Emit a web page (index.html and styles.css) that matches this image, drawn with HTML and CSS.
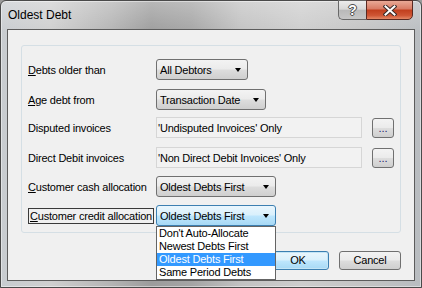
FILE: index.html
```html
<!DOCTYPE html>
<html>
<head>
<meta charset="utf-8">
<link rel="stylesheet" href="styles.css">
</head>
<body>
<div class="window">
  <div class="titlebar">
    <span class="title">Oldest Debt</span>
    <div class="caption">
      <div class="cbtn help">?</div>
      <div class="cbtn close">
        <svg width="14" height="11" viewBox="0 0 14 11">
          <path d="M2.5 1.5 L11.5 9.5 M11.5 1.5 L2.5 9.5" stroke="#3a2a28" stroke-width="4" stroke-linecap="square"/>
          <path d="M2.5 1.5 L11.5 9.5 M11.5 1.5 L2.5 9.5" stroke="#ffffff" stroke-width="2" stroke-linecap="square"/>
        </svg>
      </div>
    </div>
  </div>
  <div class="client">
    <div class="group">
      <div class="row">
        <span class="label"><u>D</u>ebts older than</span>
        <div class="combo w92"><span>All Debtors</span><i class="arrow"></i></div>
      </div>
      <div class="row g9">
        <span class="label"><u>A</u>ge debt from</span>
        <div class="combo w110"><span>Transaction Date</span><i class="arrow"></i></div>
      </div>
      <div class="row g7">
        <span class="label">Disputed invoices</span>
        <div class="field">'Undisputed Invoices' Only</div>
        <div class="dots">...</div>
      </div>
      <div class="row g9">
        <span class="label">Direct Debit invoices</span>
        <div class="field">'Non Direct Debit Invoices' Only</div>
        <div class="dots">...</div>
      </div>
      <div class="row g8">
        <span class="label"><u>C</u>ustomer cash allocation</span>
        <div class="combo w120"><span>Oldest Debts First</span><i class="arrow"></i></div>
      </div>
      <div class="row g8">
        <span class="label"><span class="focus"><u>C</u>ustomer credit allocation</span></span>
        <div class="combo w120 active"><span>Oldest Debts First</span><i class="arrow"></i>
          <ul class="list">
            <li>Don't Auto-Allocate</li>
            <li>Newest Debts First</li>
            <li class="sel">Oldest Debts First</li>
            <li>Same Period Debts</li>
          </ul>
        </div>
      </div>
    </div>
    <div class="buttons">
      <div class="btn default">OK</div>
      <div class="btn">Cancel</div>
    </div>
  </div>
</div>
</body>
</html>
```
FILE: styles.css
```css
* { box-sizing: border-box; }
html, body { margin: 0; padding: 0; }
body {
  width: 422px; height: 288px; overflow: hidden;
  font-family: "Liberation Sans", Arial, sans-serif;
  font-size: 11px; letter-spacing: -0.2px; color: #000;
  background: #9a9a9a;
}
.window {
  width: 422px; height: 288px;
  border: 1px solid #4a4a4a;
  border-radius: 6px 6px 0 0;
  padding: 0 6px 6px 6px;
  display: flex; flex-direction: column;
  background:
    linear-gradient(180deg, rgba(255,255,255,0.28) 0px, rgba(255,255,255,0.05) 28px, rgba(255,255,255,0) 30px),
    linear-gradient(90deg, #c8ccd0 0px, #cfcfcf 50px, #b4b4b4 110px, #9c9c9c 150px, #a4a4a4 190px, #c2c2c2 240px, #cdcdcd 300px, #c4c4c4 360px, #b8bcc0 422px);
  box-shadow: inset 0 0 0 1px rgba(255,255,255,0.45);
}
.titlebar {
  height: 28px; flex: none;
  display: flex; align-items: flex-start;
}
.title {
  font-size: 12px; letter-spacing: 0; line-height: 14px;
  padding: 7px 0 0 1px; color: #000;
}
.caption { margin-left: auto; margin-right: 2px; margin-top: -1px; display: flex; }
.cbtn {
  height: 20px; display: flex; align-items: center; justify-content: center;
}
.help {
  width: 28px;
  border: 1px solid #686868; border-right: none;
  border-radius: 0 0 0 5px;
  background: linear-gradient(180deg, #ececec 0%, #d8d8d8 45%, #b9b9b9 52%, #c6c6c6 100%);
  color: #fff; font-weight: bold; font-size: 14px; letter-spacing: 0;
  text-shadow: 0 0 1px #333, 1px 0 0 #555, -1px 0 0 #555, 0 1px 0 #555, 0 -1px 0 #555;
}
.close {
  width: 47px;
  border: 1px solid #5a2a22;
  border-radius: 0 0 5px 0;
  background: linear-gradient(180deg, #e9a996 0%, #d97d66 42%, #c2401f 52%, #cf5534 80%, #e48866 100%);
}
.client {
  flex: 1;
  border: 1px solid #5c5c5c;
  background: #f0f0f0;
  display: flex; flex-direction: column;
}
.group {
  margin: 15px 13px 0 13px;
  height: 188px;
  border: 1px solid #d5dfe5;
  border-radius: 3px;
  padding: 13px 6px 0 6px;
}
.row { display: flex; align-items: center; height: 21px; }
.g7 { margin-top: 7px; }
.g8 { margin-top: 8px; }
.g9 { margin-top: 9px; }
.label { width: 128px; flex: none; line-height: 14px; white-space: nowrap; }
.focus { display: inline-block; border: 1px solid #3a3a3a; padding: 0 1px; line-height: 14px; }
.combo {
  position: relative;
  height: 21px;
  border: 1px solid #707070; border-radius: 3px;
  background: linear-gradient(180deg, #f3f3f3 0%, #ebebeb 48%, #dddddd 52%, #cfcfcf 100%);
  display: flex; align-items: center;
  padding-left: 3px;
  white-space: nowrap;
}
.combo.active {
  border-color: #3c7fb1;
  background: linear-gradient(180deg, #eaf6fd 0%, #d9f0fc 48%, #bee6fd 52%, #a7d9f5 100%);
}
.w92 { width: 92px; }
.w110 { width: 110px; }
.w120 { width: 120px; }
.arrow {
  position: absolute; right: 6px; top: 8px;
  width: 0; height: 0;
  border-left: 3.5px solid transparent; border-right: 3.5px solid transparent;
  border-top: 4px solid #000;
}
.field {
  width: 207px; height: 21px;
  border: 1px solid #d6d6d6;
  background: #f2f2f2;
  padding-left: 1px;
  display: flex; align-items: center;
  white-space: nowrap;
}
.dots {
  width: 22px; height: 20px; margin-left: 10px;
  border: 1px solid #707070; border-radius: 3px;
  background: linear-gradient(180deg, #f3f3f3 0%, #ebebeb 48%, #dddddd 52%, #cfcfcf 100%);
  color: #20206a; text-align: center; line-height: 18px; letter-spacing: 0;
}
.list {
  position: absolute; left: -1px; top: 20px;
  width: 120px; margin: 0; padding: 0; list-style: none;
  border: 1px solid #646464;
  background: #fff;
  z-index: 5;
}
.list li { height: 13px; line-height: 13px; padding-left: 2px; white-space: nowrap; }
.list li.sel { background: #3399ff; color: #fff; }
.buttons {
  display: flex; justify-content: flex-end; gap: 10px;
  margin: 18px 13px 0 0;
}
.btn {
  width: 62px; height: 19px;
  border: 1px solid #707070; border-radius: 3px;
  background: linear-gradient(180deg, #f3f3f3 0%, #ebebeb 48%, #dddddd 52%, #cfcfcf 100%);
  text-align: center; line-height: 17px;
}
.btn.default {
  border-color: #3c7fb1;
  background: linear-gradient(180deg, #eaf6fd 0%, #d9f0fc 48%, #bee6fd 52%, #a7d9f5 100%);
  box-shadow: inset 0 0 0 1px #c4e5f6;
}
```
